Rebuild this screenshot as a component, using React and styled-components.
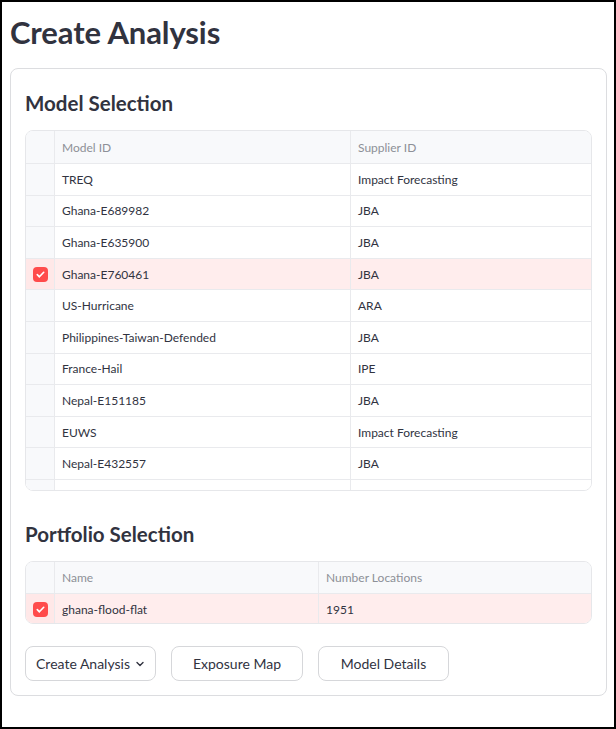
import React from "react";
import styled, { createGlobalStyle } from "styled-components";

const Global = createGlobalStyle`
  html, body { margin: 0; padding: 0; background: #fff; }
  body { font-family: Lato, "Noto Sans", sans-serif; color: #31333F; }
  * { box-sizing: border-box; }
`;

const Frame = styled.div`
  width: 616px;
  height: 729px;
  border: 2px solid #000;
  padding: 12px 7px 0 8px;
  background: #fff;
  overflow: hidden;
`;

const Title = styled.h1`
  margin: 0;
  font-size: 31px;
  line-height: 36px;
  font-weight: 700;
  color: #31333F;
  letter-spacing: -0.1px;
`;

const Card = styled.section`
  margin-top: 18px;
  border: 1px solid #dcdde0;
  border-radius: 8px;
  padding: 20px 14px 14px 14px;
  display: flex;
  flex-direction: column;
`;

const Heading = styled.h2`
  margin: 0;
  font-size: 20.5px;
  line-height: 28px;
  font-weight: 700;
  color: #31333F;
  margin-top: ${(p) => p.$top || 0}px;
`;

const Table = styled.div`
  margin-top: 13px;
  border: 1px solid #e6e7ea;
  border-radius: 8px;
  overflow: hidden;
  height: ${(p) => p.$height}px;
`;

const Row = styled.div`
  display: grid;
  grid-template-columns: ${(p) => p.$cols};
  height: ${(p) => p.$h}px;
  border-bottom: 1px solid #e9eaed;
  background: ${(p) => (p.$header ? "#f8f9fb" : p.$selected ? "#ffeded" : "#fff")};
  &:last-child { border-bottom: none; }
`;

const Cell = styled.div`
  display: flex;
  align-items: center;
  padding: 0 7px;
  font-size: 12px;
  color: ${(p) => (p.$header ? "#8d9097" : "#31333F")};
  border-left: 1px solid #e9eaed;
  white-space: nowrap;
  overflow: hidden;
`;

const CheckCell = styled.div`
  display: flex;
  align-items: center;
  justify-content: center;
  background: ${(p) => (p.$selected ? "#ffe8e8" : "#f8f9fb")};
`;

const Box = styled.span`
  width: 15px;
  height: 15px;
  border-radius: 4px;
  background: #ff4b4b;
  display: flex;
  align-items: center;
  justify-content: center;
`;

const Buttons = styled.div`
  margin-top: 22px;
  display: flex;
  gap: 15px;
`;

const Button = styled.button`
  width: ${(p) => p.$w}px;
  height: 35px;
  border: 1px solid #d6d7da;
  border-radius: 8px;
  background: #fff;
  font-family: Lato, "Noto Sans", sans-serif;
  font-size: 14px;
  color: #31333F;
  display: flex;
  align-items: center;
  justify-content: center;
  gap: 5px;
  padding: 0;
`;

const Check = () => (
  <Box>
    <svg width="11" height="11" viewBox="0 0 12 12">
      <path d="M2.5 6.2l2.3 2.3 4.7-4.9" fill="none" stroke="#fff" strokeWidth="1.8" strokeLinecap="round" strokeLinejoin="round" />
    </svg>
  </Box>
);

const models = [
  ["TREQ", "Impact Forecasting"],
  ["Ghana-E689982", "JBA"],
  ["Ghana-E635900", "JBA"],
  ["Ghana-E760461", "JBA", true],
  ["US-Hurricane", "ARA"],
  ["Philippines-Taiwan-Defended", "JBA"],
  ["France-Hail", "IPE"],
  ["Nepal-E151185", "JBA"],
  ["EUWS", "Impact Forecasting"],
  ["Nepal-E432557", "JBA"],
  ["Nepal-E123456", "JBA"],
];

const modelCols = "28px 296px 1fr";
const portCols = "28px 264px 1fr";

export default function App() {
  return (
    <>
      <Global />
      <Frame>
        <Title>Create Analysis</Title>
        <Card>
          <Heading>Model Selection</Heading>
          <Table $height={361}>
            <Row $cols={modelCols} $h={33} $header>
              <CheckCell />
              <Cell $header>Model ID</Cell>
              <Cell $header>Supplier ID</Cell>
            </Row>
            {models.map(([id, sup, sel]) => (
              <Row key={id} $cols={modelCols} $h={31.6} $selected={sel}>
                <CheckCell $selected={sel}>{sel && <Check />}</CheckCell>
                <Cell>{id}</Cell>
                <Cell>{sup}</Cell>
              </Row>
            ))}
          </Table>
          <Heading $top={29}>Portfolio Selection</Heading>
          <Table $height={63}>
            <Row $cols={portCols} $h={32} $header>
              <CheckCell />
              <Cell $header>Name</Cell>
              <Cell $header>Number Locations</Cell>
            </Row>
            <Row $cols={portCols} $h={31} $selected>
              <CheckCell $selected><Check /></CheckCell>
              <Cell>ghana-flood-flat</Cell>
              <Cell>1951</Cell>
            </Row>
          </Table>
          <Buttons>
            <Button $w={131}>
              Create Analysis
              <svg width="10" height="10" viewBox="0 0 10 10">
                <path d="M2 3.5l3 3 3-3" fill="none" stroke="#31333F" strokeWidth="1.4" strokeLinecap="round" strokeLinejoin="round" />
              </svg>
            </Button>
            <Button $w={132}>Exposure Map</Button>
            <Button $w={131}>Model Details</Button>
          </Buttons>
        </Card>
      </Frame>
    </>
  );
}
